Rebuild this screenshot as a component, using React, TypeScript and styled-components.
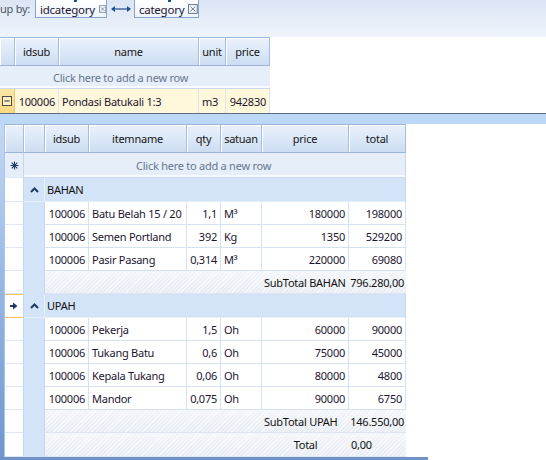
import React from 'react';
import styled, { createGlobalStyle, css } from 'styled-components';

const Global = createGlobalStyle`
  html, body { margin: 0; padding: 0; background: #fff; }
  body {
    font-family: "Noto Sans", "Open Sans", sans-serif;
    font-size: 11px;
    letter-spacing: -0.25px;
    color: #111;
    overflow: hidden;
  }
  * { box-sizing: border-box; }
`;

const Page = styled.div`
  width: 546px;
  height: 460px;
  overflow: hidden;
  display: flex;
  flex-direction: column;
  background: #fff;
`;

/* ---------- group panel ---------- */
const GroupPanel = styled.div`
  flex: none;
  height: 37px;
  background: linear-gradient(#dbe5f4, #eff4fb);
  display: flex;
  align-items: flex-start;
`;

const GroupLabel = styled.div`
  width: 35px;
  height: 18px;
  line-height: 18px;
  color: #4a5567;
  white-space: nowrap;
  padding-left: 0;
`;

const Chip = styled.div<{ $w: number }>`
  position: relative;
  width: ${p => p.$w}px;
  height: 19px;
  margin-top: -1px;
  border: 1px solid #87a4cf;
  background: linear-gradient(#ffffff, #eef3fb);
  display: flex;
  align-items: center;
  gap: 4px;
  padding: 1px 0 0 4px;
  color: #1c1530;
  font-size: 11.5px;
`;

const Tick = styled.span<{ $x: number }>`
  position: absolute;
  top: 0;
  left: ${p => p.$x}px;
  width: 3px;
  height: 2px;
  background: #1d4f91;
`;

const Connector = styled.div`
  width: 27px;
  height: 18px;
  display: flex;
  align-items: center;
  justify-content: center;
`;

/* ---------- master grid ---------- */
const Master = styled.div`
  flex: none;
  width: 270px;
  display: flex;
  flex-direction: column;
`;

const MRow = styled.div<{ $h: number }>`
  display: flex;
  height: ${p => p.$h}px;
`;

const headerBg = css`
  background: linear-gradient(#eaf1fb 0%, #dce8f8 50%, #cddcf2 100%);
  box-shadow: inset 1px 1px 0 #ffffff;
`;

const HeaderCell = styled.div<{ $w: number }>`
  ${headerBg};
  width: ${p => p.$w}px;
  flex: none;
  border-right: 1px solid #a4bee3;
  border-top: 1px solid #9ab6dd;
  border-bottom: 1px solid #9ab6dd;
  display: flex;
  align-items: center;
  justify-content: center;
  color: #151515;
  white-space: nowrap;
`;

const NewRow = styled.div<{ $pad: number }>`
  flex: 1;
  background: #e6eef9;
  color: #66768e;
  display: flex;
  align-items: center;
  padding-left: ${p => p.$pad}px;
  white-space: nowrap;
  border-bottom: 1px solid #cbd9ed;
  box-shadow: inset 0 -2px 0 #f7faff;
`;

const MIndicator = styled.div`
  width: 15px;
  flex: none;
  background: linear-gradient(#fde7a6, #fbd983);
  border-right: 1px solid #e2c978;
  display: flex;
  align-items: center;
  justify-content: center;
`;

const MCell = styled.div<{ $w: number; $right?: boolean }>`
  width: ${p => p.$w}px;
  flex: none;
  background: #fff8da;
  border-right: 1px solid #dbe5f2;
  display: flex;
  align-items: center;
  justify-content: ${p => (p.$right ? 'flex-end' : 'flex-start')};
  padding: 0 3px;
  white-space: nowrap;
  color: #1c1530;
`;

/* ---------- detail section ---------- */
const DetailTopBand = styled.div`
  flex: none;
  height: 11px;
  border-top: 1px solid #5b6b82;
  background: #bdd7f7;
`;

const DetailBody = styled.div`
  flex: none;
  display: flex;
`;

const LeftStrip = styled.div`
  width: 5px;
  flex: none;
  background: linear-gradient(#c4d9f4, #9dbde8 40%, #6f96cf);
  box-shadow: inset -1px 0 0 #a9c5ec;
`;

const DetailGrid = styled.div`
  width: 401px;
  flex: none;
  display: flex;
  flex-direction: column;
  border-right: 1px solid #c6d7ee;
`;

const BottomStrip = styled.div`
  flex: none;
  width: 428px;
  height: 3px;
  background: #6f93c9;
`;

const DRow = styled.div<{ $h: number }>`
  display: flex;
  height: ${p => p.$h}px;
  flex: none;
`;

const IndCell = styled.div<{ $sel?: boolean; $bg?: string }>`
  width: 19px;
  flex: none;
  background: ${p => p.$bg || '#ffffff'};
  border-right: 1px solid #c7d7ec;
  border-bottom: 1px solid #dfe7f2;
  display: flex;
  align-items: center;
  justify-content: center;
  ${p =>
    p.$sel &&
    css`
      border-top: 1px solid #f3c36b;
      border-bottom: 1px solid #f3c36b;
    `}
`;

const ExpCell = styled.div`
  width: 21px;
  flex: none;
  background: #d4e4f8;
  border-right: 1px solid #c6d8ef;
`;

const DCell = styled.div<{ $w: number; $right?: boolean }>`
  width: ${p => p.$w}px;
  flex: none;
  border-right: 1px solid #d6e2f1;
  border-bottom: 1px solid #d6e2f1;
  display: flex;
  align-items: center;
  justify-content: ${p => (p.$right ? 'flex-end' : 'flex-start')};
  padding: 0 3px;
  white-space: nowrap;
  overflow: hidden;
  color: #1c1530;
`;

const GroupBody = styled.div`
  flex: 1;
  display: flex;
  background: #d3e3f8;
  border-bottom: 1px solid #e6eefa;
`;

const Chevron = styled.div`
  width: 21px;
  flex: none;
  display: flex;
  align-items: center;
  justify-content: center;
  border-right: 1px solid #e8f0fb;
`;

const GroupText = styled.div`
  display: flex;
  align-items: center;
  padding-left: 2px;
  color: #111;
`;

const SummaryBody = styled.div`
  flex: 1;
  display: flex;
  border-bottom: 1px solid #dde5f0;
  background:
    repeating-linear-gradient(135deg, rgba(255,255,255,0.55) 0 1px, rgba(255,255,255,0) 1px 3px),
    linear-gradient(#f2f5f9, #e8edf4);
`;

const SumCell = styled.div<{ $w: number; $align?: 'left' | 'right' | 'center' }>`
  width: ${p => p.$w}px;
  flex: none;
  display: flex;
  align-items: center;
  justify-content: ${p =>
    p.$align === 'right' ? 'flex-end' : p.$align === 'center' ? 'center' : 'flex-start'};
  padding: 0 2px;
  white-space: nowrap;
  color: #111;
`;

/* ---------- icons ---------- */
const CloseBox = () => (
  <svg width="10" height="10" viewBox="0 0 10 10">
    <rect x="0.5" y="0.5" width="9" height="9" fill="none" stroke="#66758b" />
    <path d="M2.5 2.5 L7.5 7.5 M7.5 2.5 L2.5 7.5" stroke="#66758b" strokeWidth="1" />
  </svg>
);

const Arrows = () => (
  <svg width="20" height="8" viewBox="0 0 20 8">
    <path d="M3 4 H17" stroke="#1d4f91" strokeWidth="1.2" />
    <polygon points="0,4 4,1 4,7" fill="#1d4f91" />
    <polygon points="20,4 16,1 16,7" fill="#1d4f91" />
  </svg>
);

const CollapseBox = () => (
  <svg width="10" height="10" viewBox="0 0 10 10">
    <rect x="0.5" y="0.5" width="9" height="9" fill="#fff0c2" stroke="#4c4c4c" />
    <path d="M2.5 5 H7.5" stroke="#2b2b2b" strokeWidth="1" />
  </svg>
);

const Star = () => (
  <svg width="9" height="9" viewBox="0 0 9 9">
    <g stroke="#1e3d6e" strokeWidth="1.1">
      <path d="M4.5 0.5 V8.5 M0.5 4.5 H8.5 M1.7 1.7 L7.3 7.3 M7.3 1.7 L1.7 7.3" />
    </g>
  </svg>
);

const Up = () => (
  <svg width="9" height="6" viewBox="0 0 9 6">
    <path d="M1 5 L4.5 1.5 L8 5" fill="none" stroke="#1e3a64" strokeWidth="2" />
  </svg>
);

const Current = () => (
  <svg width="8" height="8" viewBox="0 0 8 8">
    <path d="M0 4 H4" stroke="#1e3a64" strokeWidth="2" />
    <polygon points="3,0.5 7.5,4 3,7.5" fill="#1e3a64" />
  </svg>
);

/* ---------- data ---------- */
const W = { idsub: 44, name: 98, qty: 34, sat: 41, price: 87, total: 57 };

type Item = [string, string, string, string, string, string];

const bahan: Item[] = [
  ['100006', 'Batu Belah 15 / 20', '1,1', 'M³', '180000', '198000'],
  ['100006', 'Semen Portland', '392', 'Kg', '1350', '529200'],
  ['100006', 'Pasir Pasang', '0,314', 'M³', '220000', '69080'],
];

const upah: Item[] = [
  ['100006', 'Pekerja', '1,5', 'Oh', '60000', '90000'],
  ['100006', 'Tukang Batu', '0,6', 'Oh', '75000', '45000'],
  ['100006', 'Kepala Tukang', '0,06', 'Oh', '80000', '4800'],
  ['100006', 'Mandor', '0,075', 'Oh', '90000', '6750'],
];

const ItemRow = ({ it }: { it: Item }) => (
  <DRow $h={23}>
    <IndCell />
    <ExpCell />
    <DCell $w={W.idsub} $right>{it[0]}</DCell>
    <DCell $w={W.name}>{it[1]}</DCell>
    <DCell $w={W.qty} $right>{it[2]}</DCell>
    <DCell $w={W.sat}>{it[3]}</DCell>
    <DCell $w={W.price} $right>{it[4]}</DCell>
    <DCell $w={W.total} $right>{it[5]}</DCell>
  </DRow>
);

const lead = W.idsub + W.name + W.qty + W.sat;

export default function App() {
  return (
    <Page>
      <Global />
      <GroupPanel>
        <GroupLabel>up by:</GroupLabel>
        <Chip $w={72}>
          <Tick $x={38} />
          idcategory <CloseBox />
        </Chip>
        <Connector>
          <Arrows />
        </Connector>
        <Chip $w={65}>
          <Tick $x={33} />
          category <CloseBox />
        </Chip>
      </GroupPanel>

      <Master>
        <MRow $h={29}>
          <HeaderCell $w={15} />
          <HeaderCell $w={44}>idsub</HeaderCell>
          <HeaderCell $w={140}>name</HeaderCell>
          <HeaderCell $w={27}>unit</HeaderCell>
          <HeaderCell $w={44}>price</HeaderCell>
        </MRow>
        <MRow $h={23}>
          <NewRow $pad={53}>Click here to add a new row</NewRow>
        </MRow>
        <MRow $h={24}>
          <MIndicator>
            <CollapseBox />
          </MIndicator>
          <MCell $w={44} $right>100006</MCell>
          <MCell $w={140}>Pondasi Batukali 1:3</MCell>
          <MCell $w={27}>m3</MCell>
          <MCell $w={44} $right>942830</MCell>
        </MRow>
      </Master>

      <DetailTopBand />
      <DetailBody>
        <LeftStrip />
        <DetailGrid>
          <DRow $h={29}>
            <HeaderCell $w={19} />
            <HeaderCell $w={21} />
            <HeaderCell $w={W.idsub}>idsub</HeaderCell>
            <HeaderCell $w={W.name}>itemname</HeaderCell>
            <HeaderCell $w={W.qty}>qty</HeaderCell>
            <HeaderCell $w={W.sat}>satuan</HeaderCell>
            <HeaderCell $w={W.price}>price</HeaderCell>
            <HeaderCell $w={W.total}>total</HeaderCell>
          </DRow>
          <DRow $h={25}>
            <IndCell $bg="#e6eef9">
              <Star />
            </IndCell>
            <NewRow $pad={112}>Click here to add a new row</NewRow>
          </DRow>

          <DRow $h={24}>
            <IndCell />
            <GroupBody>
              <Chevron>
                <Up />
              </Chevron>
              <GroupText>BAHAN</GroupText>
            </GroupBody>
          </DRow>
          {bahan.map((it, i) => (
            <ItemRow key={i} it={it} />
          ))}
          <DRow $h={23}>
            <IndCell />
            <ExpCell />
            <SummaryBody>
              <SumCell $w={lead} />
              <SumCell $w={W.price} $align="left">SubTotal BAHAN</SumCell>
              <SumCell $w={W.total} $align="right">796.280,00</SumCell>
            </SummaryBody>
          </DRow>

          <DRow $h={24}>
            <IndCell $sel>
              <Current />
            </IndCell>
            <GroupBody>
              <Chevron>
                <Up />
              </Chevron>
              <GroupText>UPAH</GroupText>
            </GroupBody>
          </DRow>
          {upah.map((it, i) => (
            <ItemRow key={i} it={it} />
          ))}
          <DRow $h={23}>
            <IndCell />
            <ExpCell />
            <SummaryBody>
              <SumCell $w={lead} />
              <SumCell $w={W.price} $align="left">SubTotal UPAH</SumCell>
              <SumCell $w={W.total} $align="right">146.550,00</SumCell>
            </SummaryBody>
          </DRow>
          <DRow $h={24}>
            <IndCell />
            <ExpCell />
            <SummaryBody>
              <SumCell $w={lead} />
              <SumCell $w={W.price} $align="center">Total</SumCell>
              <SumCell $w={W.total} $align="left">0,00</SumCell>
            </SummaryBody>
          </DRow>
        </DetailGrid>
      </DetailBody>
      <BottomStrip />
    </Page>
  );
}
